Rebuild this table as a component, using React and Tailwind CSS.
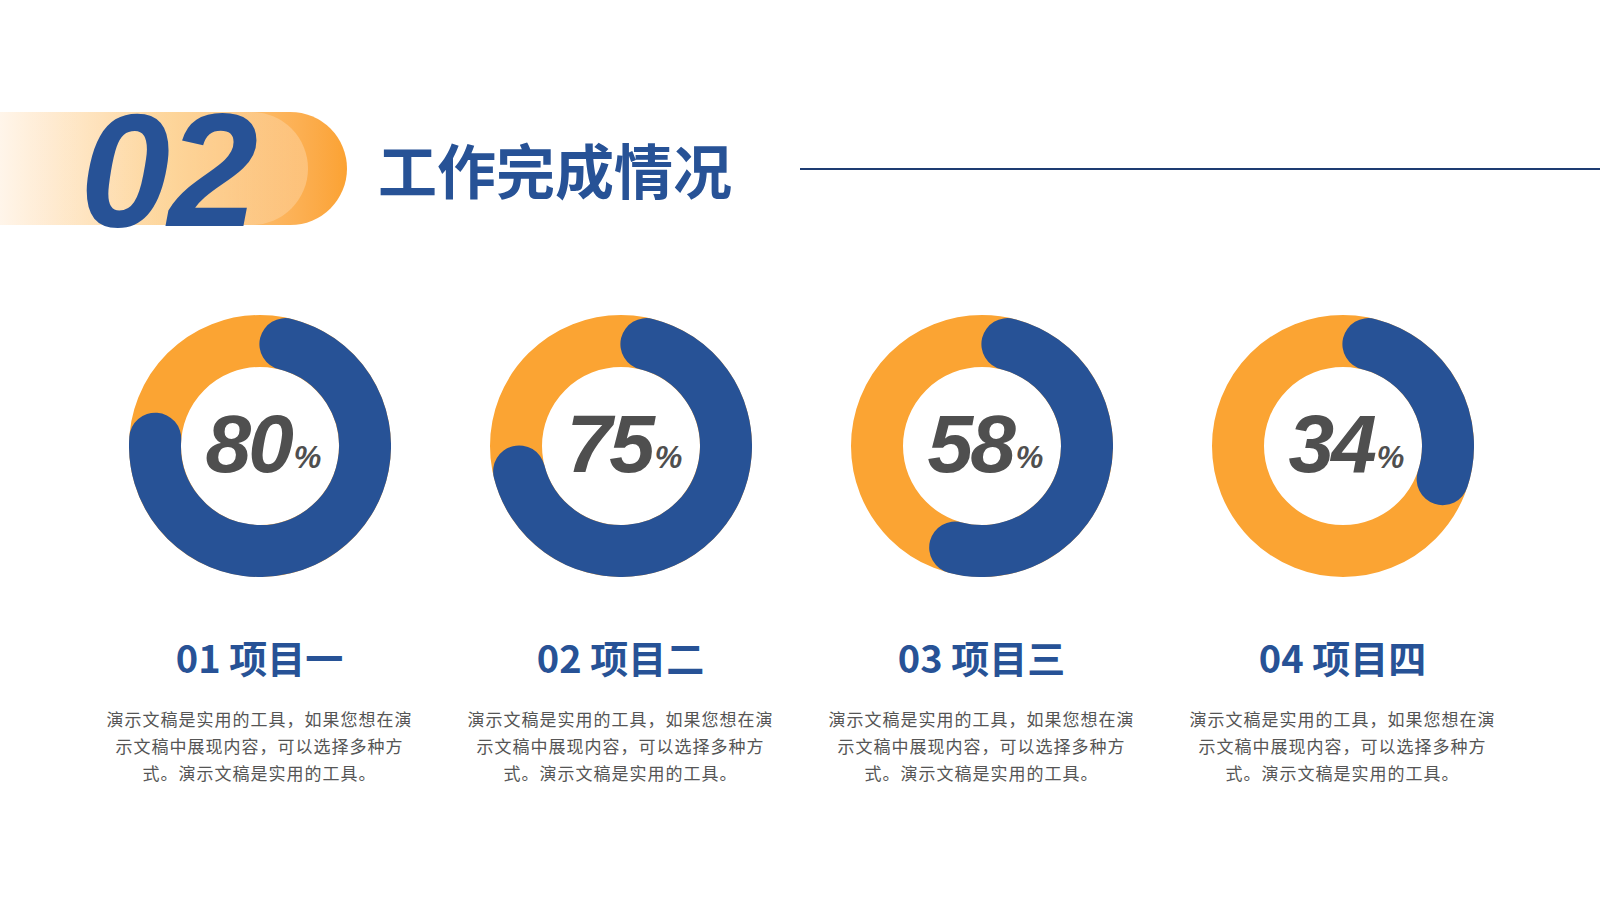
const items = [
  { value: 80, title: "01 项目一" },
  { value: 75, title: "02 项目二" },
  { value: 58, title: "03 项目三" },
  { value: 34, title: "04 项目四" },
];

const Ring = ({ value }) => {
  const c = 131;
  const r = 105;
  const cap = 14;
  const a0 = cap;
  const a1 = value * 3.6 - cap;
  const pt = (a) => {
    const rad = (a * Math.PI) / 180;
    return [c + r * Math.sin(rad), c - r * Math.cos(rad)];
  };
  const [x0, y0] = pt(a0);
  const [x1, y1] = pt(a1);
  const large = a1 - a0 > 180 ? 1 : 0;
  return (
    <div className="relative w-[262px] h-[262px]">
      <svg width="262" height="262" viewBox="0 0 262 262">
        <circle cx={c} cy={c} r={r} fill="none" stroke="#fba433" strokeWidth="52" />
        <path
          d={`M ${x0} ${y0} A ${r} ${r} 0 ${large} 1 ${x1} ${y1}`}
          fill="none"
          stroke="#275296"
          strokeWidth="52"
          strokeLinecap="round"
        />
      </svg>
      <div className="absolute inset-0 flex items-center justify-center pl-[8px] pb-[4px]">
        <div className="flex items-baseline font-['Liberation_Sans',Arial,sans-serif] font-bold italic text-[#4f4f4f]">
          <span className="text-[82px] leading-none tracking-[-3px]">{value}</span>
          <span className="text-[31px] leading-none -translate-y-[4px] ml-[3px]">%</span>
        </div>
      </div>
    </div>
  );
};

const App = () => {
  return (
    <div className="w-[1600px] h-[900px] bg-white overflow-hidden font-['Noto_Sans_CJK_SC',sans-serif]">
      <div className="flex items-center mt-[112px] h-[113px]">
        <div className="relative w-[347px] h-[113px] rounded-r-full bg-gradient-to-r from-[#fff5ea] via-[#fdd190] to-[#fba232] flex items-center">
          <div className="absolute left-0 top-0 w-[308px] h-[113px] rounded-r-full bg-gradient-to-r from-transparent via-[#ffffff10] to-[#ffffff40]"></div>
          <span className="relative pl-[80px] mt-[2px] font-['Liberation_Sans',Arial,sans-serif] font-bold italic text-[162px] leading-none tracking-[-2px] text-[#275296]">
            02
          </span>
        </div>
        <h1 className="ml-[31px] text-[59px] font-bold leading-none text-[#275296] whitespace-nowrap">
          工作完成情况
        </h1>
        <div className="flex-1 ml-[68px] h-[2px] bg-[#1e3c72]"></div>
      </div>

      <div className="flex pl-[79px] mt-[90px]">
        {items.map((it) => (
          <div key={it.title} className="w-[361px] flex flex-col items-center">
            <Ring value={it.value} />
            <div className="mt-[61px] text-[38px] leading-[38px] font-bold text-[#275296] whitespace-nowrap">
              {it.title}
            </div>
            <div className="mt-[29px] text-[17px] leading-[27px] tracking-[1px] text-[#555555] text-center whitespace-nowrap">
              <p>演示文稿是实用的工具，如果您想在演</p>
              <p>示文稿中展现内容，可以选择多种方</p>
              <p>式。演示文稿是实用的工具。</p>
            </div>
          </div>
        ))}
      </div>
    </div>
  );
};

export default App;
